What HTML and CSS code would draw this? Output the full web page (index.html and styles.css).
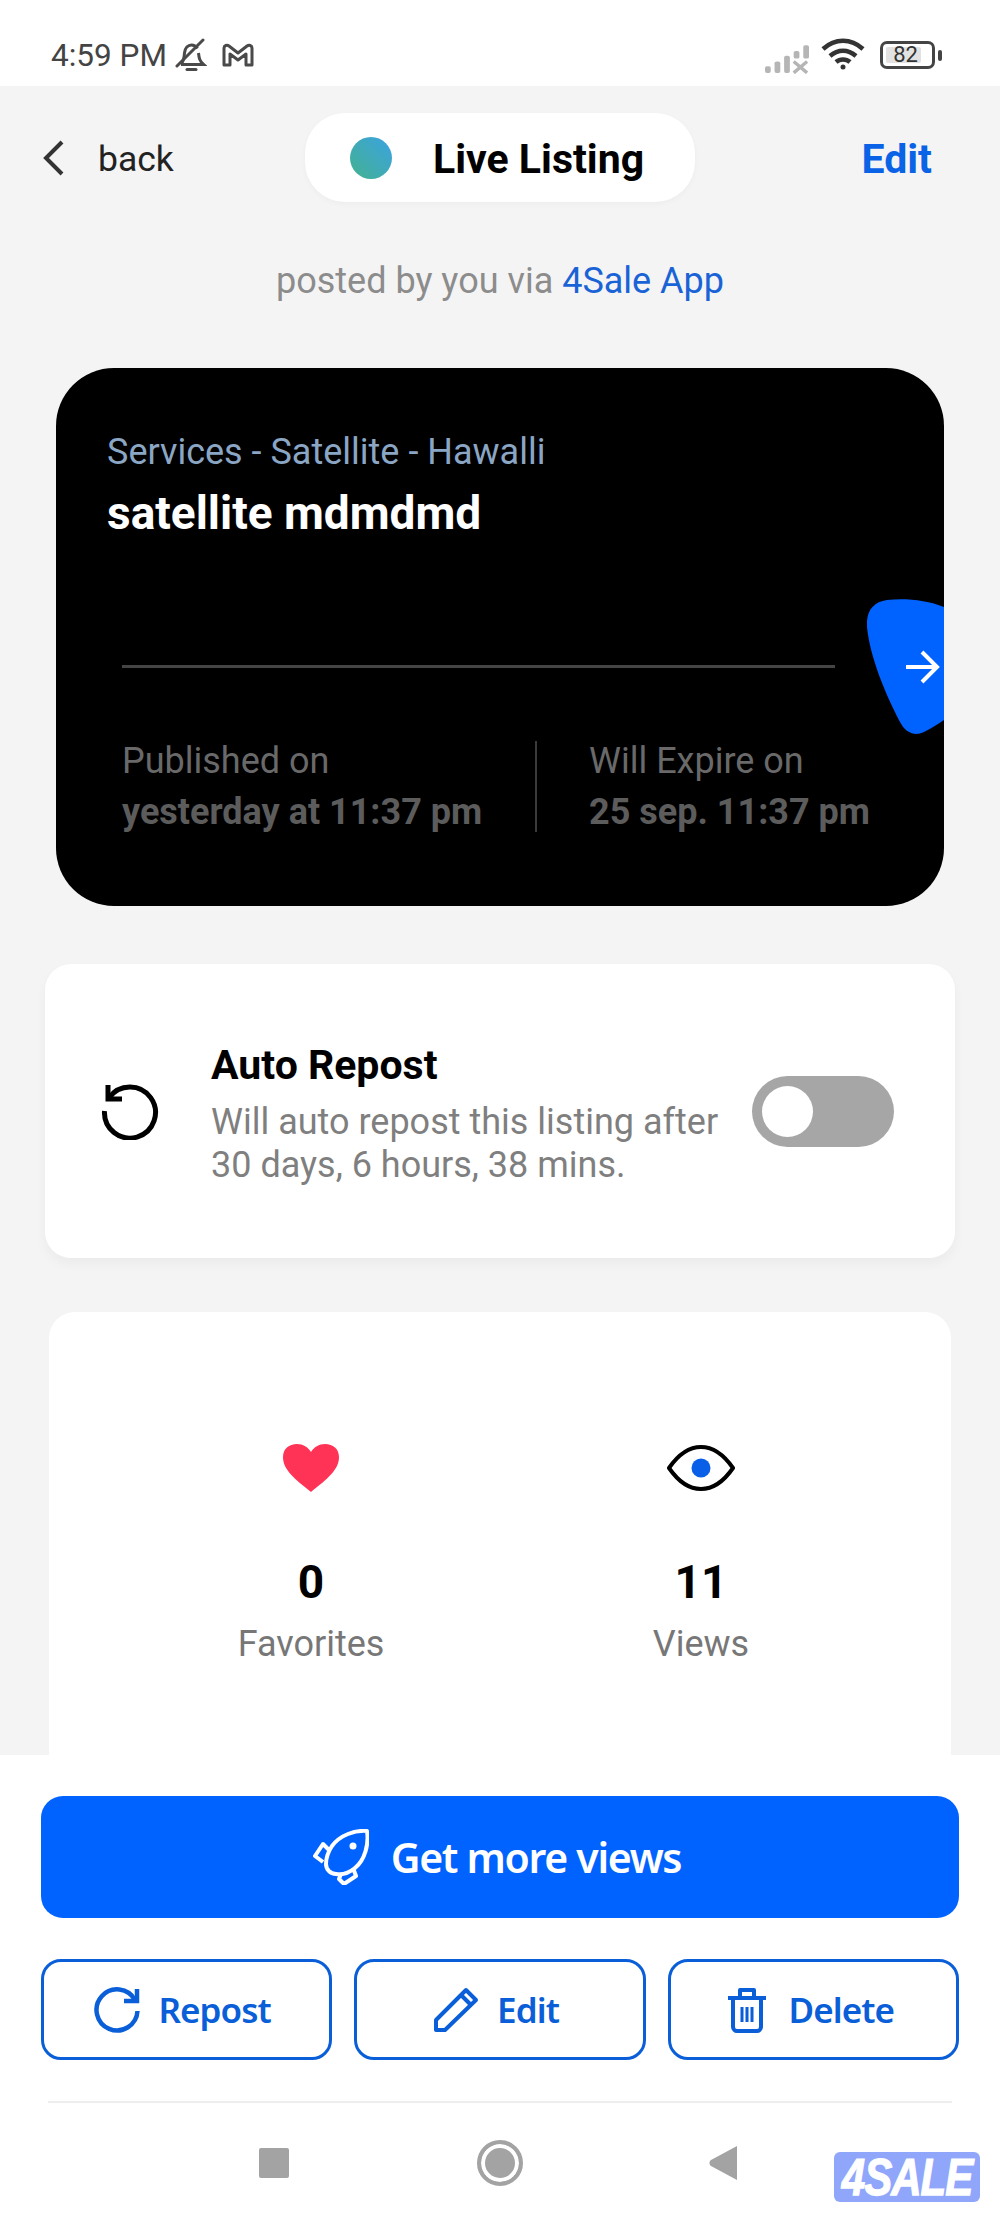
FILE: index.html
```html
<!DOCTYPE html>
<html lang="en">
<head>
    <meta charset="UTF-8">
    <meta name="viewport" content="width=device-width, initial-scale=1.0">
    <title>Live Listing</title>
    <link rel="stylesheet" href="styles.css">
</head>
<body>

<!-- Phone status bar -->
<div class="status-bar">
    <div class="status-left">
        <span class="status-time">4:59 PM</span>
        <svg class="icon-bell" viewBox="0 0 32 34" fill="none" stroke="#4a4a4a" stroke-width="3">
            <path d="M6 26c3-3 3-6 3.500-11 .5-5 3.500-8 7-8 2.500 0 4.500 1.300 6 3.500"/>
            <path d="M23.500 15c.5 5 1 8 5 11.500H6"/>
            <path d="M2 28L28 2" stroke-linecap="round"/>
            <path d="M12 31.500h9" stroke-linecap="round"/>
        </svg>
        <svg class="icon-mail" viewBox="0 0 32 24" fill="none" stroke="#4a4a4a" stroke-width="3" stroke-linejoin="round">
            <path d="M2 5c0-2.500 3-3.500 5-2l9 7 9-7c2-1.500 5-.5 5 2v17h-6V11l-8 6-8-6v11H2z"/>
        </svg>
    </div>
    <div class="status-right">
        <svg class="icon-signal" viewBox="0 0 46 30" fill="#b5b5b5">
            <rect x="0" y="22" width="6" height="7" rx="2"/>
            <rect x="10" y="17" width="6" height="12" rx="2"/>
            <rect x="20" y="11" width="6" height="18" rx="2"/>
            <rect x="30" y="6" width="6" height="8" rx="2"/>
            <rect x="40" y="0" width="6" height="14" rx="2"/>
            <path d="M30 17l14 12M44 17L30 29" stroke="#b5b5b5" stroke-width="3.500" fill="none"/>
        </svg>
        <svg class="icon-wifi" viewBox="0 0 44 32" fill="none" stroke="#333" stroke-width="4.500">
            <path d="M2 11c12-11 28-11 40 0"/>
            <path d="M9 18c8-7 18-7 26 0"/>
            <path d="M15 24c4-3.500 10-3.500 14 0"/>
            <circle cx="22" cy="29" r="2.500" fill="#333" stroke="none"/>
        </svg>
        <div class="battery">
            <div class="battery-body"><span class="battery-level">82</span></div>
            <div class="battery-nub"></div>
        </div>
    </div>
</div>

<div class="screen">
    <div class="top-bar">
        <a class="back-link" href="#">
            <svg class="icon-back" viewBox="0 0 24 36" fill="none" stroke="#333" stroke-width="4">
                <path d="M20 2L4 18l16 16"/>
            </svg>
            <span>back</span>
        </a>
        <div class="status-pill">
            <span class="status-dot"></span>
            <span class="pill-title">Live Listing</span>
        </div>
        <a class="edit-link" href="#">Edit</a>
    </div>

    <div class="posted-by">posted by you via <span class="posted-app">4Sale App</span></div>

    <!-- Listing card -->
    <div class="listing-card">
        <div class="listing-path">Services - Satellite - Hawalli</div>
        <div class="listing-title">satellite mdmdmd</div>
        <div class="listing-line"></div>
        <div class="listing-dates">
            <div class="date-col">
                <div class="date-label">Published on</div>
                <div class="date-value">yesterday at 11:37 pm</div>
            </div>
            <div class="date-col date-col-right">
                <div class="date-label">Will Expire on</div>
                <div class="date-value">25 sep. 11:37 pm</div>
            </div>
        </div>
        <svg class="listing-blob" viewBox="0 0 77 135">
            <path d="M77 8C60 1 38-1 20 1 6 3-1 12 0 28c3 30 18 66 33 95 5 10 14 15 24 10 8-4 14-8 20-12z" fill="#0062ff"/>
            <path d="M39 68h29M55 53l15 15-15 15" fill="none" stroke="#fff" stroke-width="4"/>
        </svg>
    </div>

    <!-- Auto repost -->
    <div class="repost-card">
        <svg class="icon-history" viewBox="0 0 58 58" fill="none" stroke="#000" stroke-width="5">
            <path d="M8 16A25.500 25.500 0 1 1 3.500 29"/>
            <path d="M7 3v14h14"/>
        </svg>
        <div class="repost-text">
            <div class="repost-title">Auto Repost</div>
            <div class="repost-desc">Will auto repost this listing after 30 days, 6 hours, 38 mins.</div>
        </div>
        <div class="toggle"><div class="toggle-knob"></div></div>
    </div>

    <!-- Stats -->
    <div class="stats-card">
        <div class="stat">
            <svg class="stat-icon" viewBox="0 0 56 48">
                <path d="M28 48C12 35 0 26 0 13 0 5 6 0 14 0c6 0 11 3 14 8 3-5 8-8 14-8 8 0 14 5 14 13 0 13-12 22-28 35z" fill="#ff3355"/>
            </svg>
            <div class="stat-value">0</div>
            <div class="stat-label">Favorites</div>
        </div>
        <div class="stat">
            <svg class="stat-icon" viewBox="0 0 68 48">
                <path d="M2 24C11 11 22 3 34 3s23 8 32 21c-9 13-20 21-32 21S11 37 2 24z" fill="none" stroke="#000" stroke-width="4"/>
                <circle cx="34" cy="24" r="9.500" fill="#0a5fe8"/>
            </svg>
            <div class="stat-value">11</div>
            <div class="stat-label">Views</div>
        </div>
    </div>
</div>

<!-- Actions -->
<div class="action-sheet">
    <button class="btn-primary">
        <svg class="icon-rocket" viewBox="0 0 56 56" fill="none" stroke="#fff" stroke-width="4" stroke-linejoin="round">
            <path d="M54 2C42 1 27 6 19 17c-4 6-6 12-6 18 0 5 4 10 10 10 6 1 13-1 19-6C52 31 56 15 54 2z"/>
            <circle cx="40" cy="17" r="3.500" fill="#fff" stroke="none"/>
            <path d="M16 21l-6-6-8 12 8 6"/>
            <path d="M28 45l-2 5 5 5 12-8-3-8"/>
        </svg>
        Get more views
    </button>
    <div class="action-row">
        <button class="btn-outline">
            <svg class="btn-icon" viewBox="0 0 46 46" fill="none" stroke="#0a5fd8" stroke-width="4.500">
                <path d="M41 13A20.500 20.500 0 1 0 43.500 24"/>
                <path d="M43 2v12H30"/>
            </svg>
            Repost
        </button>
        <button class="btn-outline">
            <svg class="btn-icon" viewBox="0 0 46 46" fill="none" stroke="#0a5fd8" stroke-width="4" stroke-linejoin="round">
                <path d="M3 33L33 3l10 10-31 30H3z"/>
                <path d="M28 8l10 10"/>
            </svg>
            Edit
        </button>
        <button class="btn-outline">
            <svg class="btn-icon" viewBox="0 0 46 46" fill="none" stroke="#0a5fd8" stroke-width="4" stroke-linejoin="round">
                <path d="M4 11h38"/>
                <path d="M16 11V3h14v8"/>
                <path d="M9 11v29c0 2 2 4 4 4h20c2 0 4-2 4-4V11"/>
                <path d="M18 20v15M28 20v15M23 20v15" stroke-width="3"/>
            </svg>
            Delete
        </button>
    </div>
    <div class="sheet-line"></div>
    <div class="nav-bar">
        <div class="nav-square"></div>
        <div class="nav-circle"></div>
        <svg class="nav-back" viewBox="0 0 29 34"><path d="M29 0v34L3 20c-2-1-2-5 0-6z" fill="#a3a3a3"/></svg>
    </div>
    <div class="watermark"><span class="watermark-text">4SALE</span></div>
</div>

</body>
</html>
```

FILE: styles.css
```css
* {
    box-sizing: border-box;
}

html, body {
    margin: 0;
    padding: 0;
}

body {
    width: 1000px;
    height: 2222px;
    overflow: hidden;
    display: flex;
    flex-direction: column;
    font-family: Roboto, Arial, sans-serif;
    background-color: #fff;
    color: #000;
}

a {
    text-decoration: none;
}

/* status bar */
.status-bar {
    height: 86px;
    flex: none;
    display: flex;
    align-items: center;
    justify-content: space-between;
    padding: 24px 58px 0 51px;
    background-color: #fff;
}

.status-left, .status-right {
    display: flex;
    align-items: center;
}

.status-time {
    font-size: 31.5px;
    color: #444;
}

.icon-bell {
    width: 32px;
    height: 34px;
    margin-left: 8px;
}

.icon-mail {
    width: 32px;
    height: 24px;
    margin-left: 15px;
}

.icon-signal {
    width: 44px;
    height: 29px;
    margin-top: 8px;
}

.icon-wifi {
    width: 44px;
    height: 32px;
    margin-left: 12px;
    margin-top: -2px;
}

.battery {
    display: flex;
    align-items: center;
    margin-left: 15px;
}

.battery-body {
    width: 55px;
    height: 28px;
    border: 3px solid #444;
    border-radius: 7px;
    padding: 3px;
    display: flex;
}

.battery-level {
    width: 82%;
    background-color: #e2e2e2;
    border-radius: 2px;
    font-size: 22px;
    line-height: 16px;
    color: #333;
    text-align: center;
    padding-left: 4px;
}

.battery-nub {
    width: 4px;
    height: 11px;
    margin-left: 3px;
    background-color: #444;
    border-radius: 2px;
}

/* main screen */
.screen {
    flex: 1;
    min-height: 0;
    overflow: hidden;
    background-color: #f4f4f4;
}

.top-bar {
    display: grid;
    grid-template-columns: 263px 390px 1fr;
    align-items: center;
    padding: 27px 68px 0 42px;
}

.back-link {
    display: flex;
    align-items: center;
    color: #222;
    font-size: 35.500px;
}

.back-link span {
    padding-top: 2px;
}

.icon-back {
    width: 24px;
    height: 36px;
    margin-right: 32px;
}

.status-pill {
    height: 89px;
    display: flex;
    align-items: center;
    padding-left: 45px;
    background-color: #fff;
    border-radius: 40px;
    box-shadow: 0 2px 6px rgba(0,0,0,0.03);
}

.status-dot {
    width: 42px;
    height: 42px;
    border-radius: 50%;
    background: linear-gradient(45deg, #44b28f, #3ba2e2);
}

.pill-title {
    margin-left: 41px;
    padding-top: 3px;
    font-size: 41px;
    font-weight: 700;
}

.edit-link {
    justify-self: end;
    padding-top: 3px;
    color: #0a62e6;
    font-size: 41px;
    font-weight: 700;
}

.posted-by {
    margin-top: 59px;
    text-align: center;
    font-size: 36px;
    line-height: 40px;
    color: #8c8c8c;
}

.posted-app {
    color: #1a63d6;
}

/* listing card */
.listing-card {
    position: relative;
    height: 538px;
    margin: 67px 56px 0;
    padding: 64px 0 0 51px;
    background-color: #000;
    border-radius: 58px;
    overflow: hidden;
}

.listing-path {
    font-size: 36px;
    line-height: 40px;
    color: #8aa6c4;
}

.listing-title {
    margin-top: 16px;
    font-size: 46px;
    line-height: 50px;
    font-weight: 700;
    color: #fff;
}

.listing-line {
    width: 713px;
    height: 3px;
    margin: 127px 0 0 15px;
    background-color: #444;
}

.listing-dates {
    display: flex;
    margin: 73px 0 0 15px;
}

.date-col {
    width: 413px;
}

.date-col-right {
    border-left: 2px solid #3a3a3a;
    padding-left: 52px;
    width: auto;
}

.date-label {
    font-size: 36px;
    line-height: 40px;
    color: #696969;
}

.date-value {
    margin-top: 11px;
    font-size: 36px;
    line-height: 40px;
    font-weight: 700;
    color: #5c5c5c;
    white-space: nowrap;
}

.listing-blob {
    position: absolute;
    right: 0;
    top: 231px;
    width: 77px;
    height: 135px;
}

/* auto repost */
.repost-card {
    height: 294px;
    margin: 58px 45px 0;
    padding: 0 61px 0 56px;
    display: flex;
    align-items: center;
    background-color: #fff;
    border-radius: 26px;
    box-shadow: 0 6px 12px rgba(0,0,0,0.04);
}

.icon-history {
    width: 58px;
    height: 58px;
    flex: none;
}

.repost-text {
    width: 530px;
    margin-left: 52px;
    margin-top: 7px;
}

.repost-title {
    font-size: 41px;
    line-height: 46px;
    font-weight: 700;
}

.repost-desc {
    margin-top: 13px;
    font-size: 36px;
    line-height: 43.500px;
    color: #7f7f7f;
}

.toggle {
    width: 142px;
    height: 71px;
    flex: none;
    margin-left: auto;
    padding: 10px;
    background-color: #a6a6a6;
    border-radius: 36px;
}

.toggle-knob {
    width: 51px;
    height: 51px;
    background-color: #fff;
    border-radius: 50%;
}

/* stats */
.stats-card {
    height: 600px;
    margin: 54px 49px 0;
    padding: 132px 0 0 67px;
    display: grid;
    grid-template-columns: 390px 390px;
    align-content: start;
    background-color: #fff;
    border-radius: 26px;
}

.stat {
    display: flex;
    flex-direction: column;
    align-items: center;
}

.stat-icon {
    height: 48px;
}

.stat-value {
    margin-top: 62px;
    font-size: 46px;
    line-height: 56px;
    font-weight: 700;
}

.stat-label {
    margin-top: 12px;
    font-size: 36px;
    line-height: 44px;
    color: #777;
}

/* bottom actions */
.action-sheet {
    position: relative;
    height: 467px;
    flex: none;
    padding: 41px 41px 0;
    background-color: #fff;
}

.btn-primary, .btn-outline {
    display: flex;
    align-items: center;
    justify-content: center;
    font-family: "Noto Sans", Arial, sans-serif;
    font-weight: 600;
    cursor: pointer;
}

.btn-primary {
    width: 100%;
    height: 122px;
    padding: 0 6px 0 0;
    border: none;
    border-radius: 22px;
    background-color: #0062ff;
    color: #fff;
    font-size: 41px;
    letter-spacing: -1.300px;
}

.icon-rocket {
    width: 56px;
    height: 56px;
    margin-right: 22px;
}

.action-row {
    display: flex;
    gap: 22px;
    margin-top: 41px;
}

.btn-outline {
    flex: 1;
    height: 101px;
    padding: 0 8px 0 0;
    border: 3px solid #0a5fd8;
    border-radius: 20px;
    background-color: #fff;
    color: #0a5fd8;
    font-size: 35px;
    letter-spacing: -0.900px;
}

.btn-icon {
    width: 46px;
    height: 46px;
    margin-right: 18px;
}

.sheet-line {
    height: 2px;
    margin: 41px 7px 0;
    background-color: #eee;
}

.nav-bar {
    display: flex;
    align-items: center;
    margin-top: 37px;
    height: 46px;
    padding-left: 218px;
}

.nav-square {
    width: 30px;
    height: 30px;
    background-color: #a3a3a3;
    border-radius: 2px;
}

.nav-circle {
    width: 46px;
    height: 46px;
    margin-left: 188px;
    border: 4px solid #a3a3a3;
    border-radius: 50%;
    background-color: #a3a3a3;
    box-shadow: inset 0 0 0 4px #fff;
}

.nav-back {
    width: 29px;
    height: 34px;
    margin-left: 185px;
}

/* logo over the corner of the shot */
.watermark {
    position: absolute;
    right: 20px;
    bottom: 20px;
    width: 146px;
    height: 50px;
    background-color: #8fa6fb;
    border-radius: 6px;
    color: #fff;
    font-family: "Liberation Sans", Arial, sans-serif;
    font-size: 42px;
    font-weight: 700;
    font-style: italic;
    line-height: 50px;
    text-align: center;
}

.watermark-text {
    display: inline-block;
    letter-spacing: -1px;
    transform: scaleY(1.250);
    -webkit-text-stroke: 1px #fff;
}
```
